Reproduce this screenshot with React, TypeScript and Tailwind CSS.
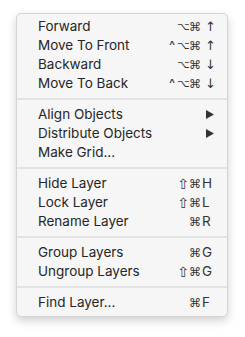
import React from 'react'

type Item =
  | { kind: 'item'; label: string; mods?: string[]; keyLabel?: string; submenu?: boolean }
  | { kind: 'sep' }

const ITEMS: Item[] = [
  { kind: 'item', label: 'Forward', mods: ['⌥', '⌘'], keyLabel: '↑' },
  { kind: 'item', label: 'Move To Front', mods: ['^', '⌥', '⌘'], keyLabel: '↑' },
  { kind: 'item', label: 'Backward', mods: ['⌥', '⌘'], keyLabel: '↓' },
  { kind: 'item', label: 'Move To Back', mods: ['^', '⌥', '⌘'], keyLabel: '↓' },
  { kind: 'sep' },
  { kind: 'item', label: 'Align Objects', submenu: true },
  { kind: 'item', label: 'Distribute Objects', submenu: true },
  { kind: 'item', label: 'Make Grid...' },
  { kind: 'sep' },
  { kind: 'item', label: 'Hide Layer', mods: ['⇧', '⌘'], keyLabel: 'H' },
  { kind: 'item', label: 'Lock Layer', mods: ['⇧', '⌘'], keyLabel: 'L' },
  { kind: 'item', label: 'Rename Layer', mods: ['⌘'], keyLabel: 'R' },
  { kind: 'sep' },
  { kind: 'item', label: 'Group Layers', mods: ['⌘'], keyLabel: 'G' },
  { kind: 'item', label: 'Ungroup Layers', mods: ['⇧', '⌘'], keyLabel: 'G' },
  { kind: 'sep' },
  { kind: 'item', label: 'Find Layer...', mods: ['⌘'], keyLabel: 'F' },
]

const MOD_CLS: Record<string, string> = {
  '^': "w-[10px] text-center font-['Inter',sans-serif] text-[13px]",
  '⌥': "w-[12px] text-center font-['DejaVu_Sans',sans-serif] text-[11px]",
  '⌘': "w-[12px] text-center font-['DejaVu_Sans',sans-serif] text-[12px]",
  '⇧': "w-[12px] text-center font-['DejaVu_Sans',sans-serif] text-[14px]",
}

function Shortcut({ mods, keyLabel }: { mods: string[]; keyLabel: string }) {
  const arrow = keyLabel === '↑' || keyLabel === '↓'
  return (
    <div className="flex h-[19px] items-center leading-none text-[#333]">
      {mods.map((m, i) => (
        <span key={i} className={MOD_CLS[m]}>
          {m}
        </span>
      ))}
      <span
        className={
          arrow
            ? "w-[14px] pl-[4px] font-['DejaVu_Sans',sans-serif] text-[13px]"
            : 'w-[14px] pl-[1px]'
        }
      >
        {keyLabel}
      </span>
    </div>
  )
}

export default function App() {
  return (
    <div className="h-[337px] w-[245px] bg-white pt-[13px] pl-[16px]">
      <div className="w-[212px] rounded-[5px] border border-[#d4d4d4] bg-[#f6f6f6] pt-[3px] pb-[4px] shadow-[0_4px_10px_rgba(0,0,0,0.18)] font-['Inter',sans-serif] text-[13.5px] text-[#262626]">
        {ITEMS.map((it, i) =>
          it.kind === 'sep' ? (
            <div key={i} className="flex h-[12px] items-center">
              <div className="h-[2px] w-full bg-[#e3e3e3]" />
            </div>
          ) : (
            <div key={i} className="flex h-[19px] items-center justify-between pr-[12px] pl-[21px]">
              <span>{it.label}</span>
              {it.submenu ? (
                <svg width="8" height="9" viewBox="0 0 8 9" className="mr-[1px]">
                  <path d="M0 0 L8 4.5 L0 9 Z" fill="#333" />
                </svg>
              ) : it.mods && it.keyLabel ? (
                <Shortcut mods={it.mods} keyLabel={it.keyLabel} />
              ) : null}
            </div>
          ),
        )}
      </div>
    </div>
  )
}
